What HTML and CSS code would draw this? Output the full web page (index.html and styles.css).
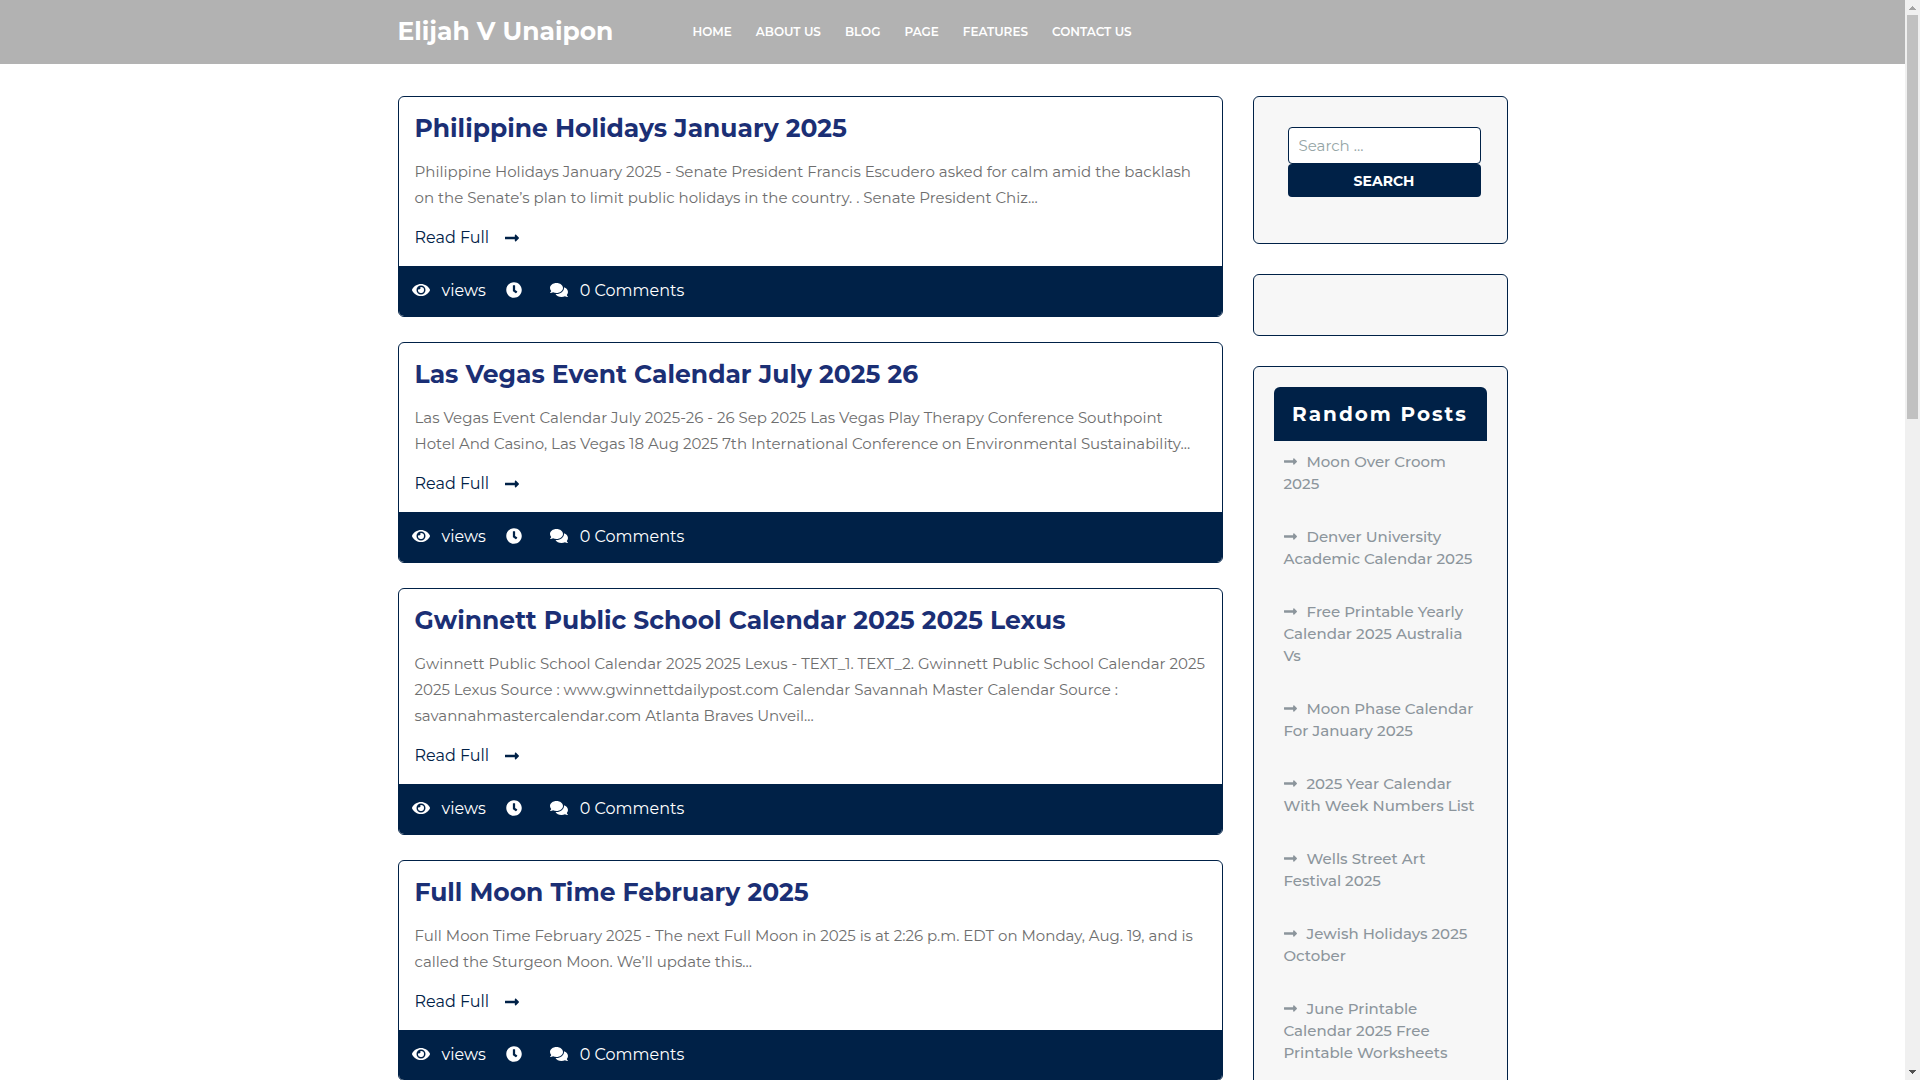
FILE: index.html
```
<!DOCTYPE html>
<html lang="en">
<head>
<meta charset="utf-8">
<title>Elijah V Unaipon</title>
<meta name="viewport" content="width=device-width, initial-scale=1">
<link rel="stylesheet" href="styles.css">
</head>
<body>
<svg class="sprite" aria-hidden="true">
  <symbol id="arrow" viewBox="0 0 448 512"><path d="M313.941 216H12c-6.627 0-12 5.373-12 12v56c0 6.627 5.373 12 12 12h301.941v46.059c0 21.382 25.851 32.09 40.971 16.971l86.059-86.059c9.373-9.373 9.373-24.569 0-33.941l-86.059-86.059c-15.119-15.119-40.971-4.411-40.971 16.971V216z"/></symbol>
  <symbol id="eye" viewBox="0 0 576 512"><path d="M572.52 241.4C518.29 135.59 410.93 64 288 64S57.68 135.64 3.48 241.41a32.35 32.35 0 0 0 0 29.19C57.71 376.41 165.07 448 288 448s230.32-71.64 284.52-177.41a32.35 32.35 0 0 0 0-29.19zM288 400a144 144 0 1 1 144-144 143.93 143.93 0 0 1-144 144zm0-240a95.31 95.31 0 0 0-25.31 3.79 47.85 47.85 0 0 1-66.9 66.9A95.78 95.78 0 1 0 288 160z"/></symbol>
  <symbol id="clock" viewBox="0 0 512 512"><path d="M256 8C119 8 8 119 8 256s111 248 248 248 248-111 248-248S393 8 256 8zm57.1 350.1L224.9 294c-3.1-2.3-4.9-5.9-4.9-9.7V116c0-6.6 5.4-12 12-12h48c6.6 0 12 5.4 12 12v137.7l63.5 46.2c5.4 3.9 6.5 11.4 2.6 16.8l-28.2 38.8c-3.9 5.3-11.4 6.5-16.8 2.6z"/></symbol>
  <symbol id="comments" viewBox="0 0 576 512"><path d="M416 192c0-88.4-93.1-160-208-160S0 103.6 0 192c0 34.3 14.1 65.9 38 92-13.4 30.2-35.5 54.2-35.8 54.5-2.2 2.3-2.8 5.7-1.5 8.7S4.8 352 8 352c36.6 0 66.9-12.3 88.7-25 32.2 15.7 70.3 25 111.3 25 114.9 0 208-71.6 208-160zm122 220c23.9-26 38-57.7 38-92 0-66.9-53.5-124.2-129.3-148.1.9 6.6 1.3 13.3 1.3 20.1 0 105.9-107.7 192-240 192-10.8 0-21.3-.8-31.7-1.9C207.8 439.6 281.8 480 368 480c41 0 79.1-9.2 111.3-25 21.8 12.7 52.1 25 88.7 25 3.2 0 6.1-1.9 7.3-4.8 1.3-3 .7-6.4-1.5-8.7-.3-.3-22.4-24.2-35.8-54.5z"/></symbol>
</svg>
<div class="page">
  <header class="site-header">
    <div class="container header-row">
      <a class="logo" href="#">Elijah V Unaipon</a>
      <nav class="menu">
        <a href="#">HOME</a>
        <a href="#">ABOUT US</a>
        <a href="#">BLOG</a>
        <a href="#">PAGE</a>
        <a href="#">FEATURES</a>
        <a href="#">CONTACT US</a>
      </nav>
    </div>
  </header>
  <div class="container columns">
    <main class="posts">
      <article class="post">
        <div class="post-body">
          <h2><a href="#">Philippine Holidays January 2025</a></h2>
          <p>Philippine Holidays January 2025 - Senate President Francis Escudero asked for calm amid the backlash on the Senate’s plan to limit public holidays in the country. . Senate President Chiz…</p>
          <a class="read" href="#">Read Full <svg class="icon-arrow"><use href="#arrow"/></svg></a>
        </div>
        <div class="post-meta">
          <span class="meta"><svg class="icon-wide"><use href="#eye"/></svg>views</span>
          <span class="meta"><svg class="icon-round"><use href="#clock"/></svg></span>
          <a class="meta" href="#"><svg class="icon-wide"><use href="#comments"/></svg>0 Comments</a>
        </div>
      </article>
      <article class="post">
        <div class="post-body">
          <h2><a href="#">Las Vegas Event Calendar July 2025 26</a></h2>
          <p>Las Vegas Event Calendar July 2025-26 - 26 Sep 2025 Las Vegas Play Therapy Conference Southpoint Hotel And Casino, Las Vegas 18 Aug 2025 7th International Conference on Environmental Sustainability…</p>
          <a class="read" href="#">Read Full <svg class="icon-arrow"><use href="#arrow"/></svg></a>
        </div>
        <div class="post-meta">
          <span class="meta"><svg class="icon-wide"><use href="#eye"/></svg>views</span>
          <span class="meta"><svg class="icon-round"><use href="#clock"/></svg></span>
          <a class="meta" href="#"><svg class="icon-wide"><use href="#comments"/></svg>0 Comments</a>
        </div>
      </article>
      <article class="post">
        <div class="post-body">
          <h2><a href="#">Gwinnett Public School Calendar 2025 2025 Lexus</a></h2>
          <p>Gwinnett Public School Calendar 2025 2025 Lexus - TEXT_1. TEXT_2. Gwinnett Public School Calendar 2025 2025 Lexus Source : www.gwinnettdailypost.com Calendar Savannah Master Calendar Source : savannahmastercalendar.com Atlanta Braves Unveil…</p>
          <a class="read" href="#">Read Full <svg class="icon-arrow"><use href="#arrow"/></svg></a>
        </div>
        <div class="post-meta">
          <span class="meta"><svg class="icon-wide"><use href="#eye"/></svg>views</span>
          <span class="meta"><svg class="icon-round"><use href="#clock"/></svg></span>
          <a class="meta" href="#"><svg class="icon-wide"><use href="#comments"/></svg>0 Comments</a>
        </div>
      </article>
      <article class="post">
        <div class="post-body">
          <h2><a href="#">Full Moon Time February 2025</a></h2>
          <p>Full Moon Time February 2025 - The next Full Moon in 2025 is at 2:26 p.m. EDT on Monday, Aug. 19, and is called the Sturgeon Moon. We’ll update this…</p>
          <a class="read" href="#">Read Full <svg class="icon-arrow"><use href="#arrow"/></svg></a>
        </div>
        <div class="post-meta">
          <span class="meta"><svg class="icon-wide"><use href="#eye"/></svg>views</span>
          <span class="meta"><svg class="icon-round"><use href="#clock"/></svg></span>
          <a class="meta" href="#"><svg class="icon-wide"><use href="#comments"/></svg>0 Comments</a>
        </div>
      </article>
    </main>
    <aside class="sidebar">
      <section class="widget widget-search">
        <form class="search">
          <input type="search" placeholder="Search …" aria-label="Search for:">
          <button type="submit">SEARCH</button>
        </form>
      </section>
      <section class="widget widget-empty"></section>
      <section class="widget">
        <h3>Random Posts</h3>
        <ul>
          <li><a href="#"><svg class="icon-item"><use href="#arrow"/></svg>Moon Over Croom 2025</a></li>
          <li><a href="#"><svg class="icon-item"><use href="#arrow"/></svg>Denver University Academic Calendar 2025</a></li>
          <li><a href="#"><svg class="icon-item"><use href="#arrow"/></svg>Free Printable Yearly Calendar 2025 Australia Vs</a></li>
          <li><a href="#"><svg class="icon-item"><use href="#arrow"/></svg>Moon Phase Calendar For January 2025</a></li>
          <li><a href="#"><svg class="icon-item"><use href="#arrow"/></svg>2025 Year Calendar With Week Numbers List</a></li>
          <li><a href="#"><svg class="icon-item"><use href="#arrow"/></svg>Wells Street Art Festival 2025</a></li>
          <li><a href="#"><svg class="icon-item"><use href="#arrow"/></svg>Jewish Holidays 2025 October</a></li>
          <li><a href="#"><svg class="icon-item"><use href="#arrow"/></svg>June Printable Calendar 2025 Free Printable Worksheets</a></li>
        </ul>
      </section>
    </aside>
  </div>
</div>
<div class="scrollbar" aria-hidden="true">
  <svg class="scroll-arrow up" viewBox="0 0 7 4"><path d="M3 0h1v1h1v1h1v1h1v1H0V3h1V2h1V1h1z"/></svg>
  <div class="track"><div class="thumb"></div></div>
  <svg class="scroll-arrow down" viewBox="0 0 7 4"><path d="M3 4h1V3h1V2h1V1h1V0H0v1h1v1h1v1h1z"/></svg>
</div>
</body>
</html>
```
FILE: styles.css
```
:root {
  --navy: #002147;
  --title: #1b2f75;
  --text: #6e6e6e;
  --muted: #8c959c;
  --panel: #f7f7f7;
}

* {
  box-sizing: border-box;
}

body {
  margin: 0;
  display: flex;
  height: 100vh;
  overflow: hidden;
  background: #fff;
  color: var(--text);
  font-family: Montserrat, Inter, "Open Sans", sans-serif;
  font-size: 16px;
}

a {
  color: inherit;
  text-decoration: none;
}

svg {
  fill: currentColor;
  flex: none;
}

.sprite {
  display: none;
}

.page {
  flex: 1;
  min-width: 0;
  overflow: hidden;
}

.container {
  width: 100%;
  max-width: 1140px;
  margin: 0 auto;
  padding: 0 15px;
}

.site-header {
  background: #b2b2b2;
  color: #fff;
}

.header-row {
  display: grid;
  grid-template-columns: 295px 1fr;
  align-items: center;
  height: 64px;
  padding-bottom: 2px;
}

.logo {
  font-size: 25px;
  font-weight: 700;
}

.menu {
  display: flex;
  gap: 24px;
  font-size: 12px;
  font-weight: 600;
}

.columns {
  display: grid;
  grid-template-columns: minmax(0, 1fr) 255px;
  gap: 30px;
  align-items: start;
  padding-top: 32px;
}

.posts {
  display: flex;
  flex-direction: column;
  gap: 25px;
}

.post {
  border: 1px solid var(--navy);
  border-radius: 6px;
  overflow: hidden;
}

.post-body {
  padding: 16px 15px 16px 16px;
}

.post h2 {
  margin: 0 0 16px;
  color: var(--title);
  font-size: 25px;
  line-height: 30px;
}

.post p {
  margin: 0 0 15px;
  font-size: 15px;
  line-height: 26px;
}

.read {
  display: flex;
  align-items: center;
  gap: 16px;
  color: var(--navy);
  line-height: 24px;
}

.icon-arrow {
  width: 14px;
  height: 16px;
}

.post-meta {
  display: flex;
  align-items: center;
  height: 50px;
  padding: 0 13px 2px;
  gap: 20px;
  background: var(--navy);
  color: #fff;
}

.meta {
  display: flex;
  align-items: center;
  gap: 12px;
}

.meta + a.meta {
  margin-left: 8px;
}

.icon-wide {
  width: 18px;
  height: 16px;
}

.icon-round {
  width: 16px;
  height: 16px;
}

.sidebar {
  display: flex;
  flex-direction: column;
  gap: 30px;
}

.widget {
  padding: 20px;
  border: 1px solid var(--navy);
  border-radius: 6px;
  background: var(--panel);
}

.widget-search {
  padding: 30px 26px 46px 34px;
}

.widget-empty {
  height: 62px;
}

.search {
  display: flex;
  flex-direction: column;
}

.search input {
  width: 100%;
  height: 37px;
  padding: 0 10px;
  border: 1px solid var(--navy);
  border-radius: 4px;
  background: #fff;
  font: inherit;
  font-size: 15px;
}

.search input::placeholder {
  color: #95a5a6;
}

.search button {
  height: 33px;
  padding: 0;
  border: 0;
  border-radius: 4px;
  background: var(--navy);
  color: #fff;
  font: inherit;
  font-size: 14px;
  font-weight: 700;
}

.widget h3 {
  margin: 0;
  padding: 12px 0;
  border-radius: 6px 6px 0 0;
  background: var(--navy);
  color: #fff;
  font-size: 20px;
  letter-spacing: 2px;
  line-height: 30px;
  text-align: center;
}

.widget ul {
  display: flex;
  flex-direction: column;
  gap: 31px;
  margin: 0;
  padding: 10px;
  list-style: none;
  color: var(--muted);
  font-size: 15px;
  font-weight: 500;
  line-height: 22px;
}

.icon-item {
  width: 13px;
  height: 15px;
  margin-right: 10px;
  vertical-align: -2px;
}

.scrollbar {
  display: flex;
  flex: none;
  flex-direction: column;
  align-items: center;
  width: 15px;
  padding: 6px 0;
  background: #f0f0f0;
}

.scroll-arrow {
  width: 7px;
  height: 4px;
  shape-rendering: crispEdges;
}

.up {
  color: #a3a3a3;
}

.down {
  color: #505050;
}

.track {
  flex: 1;
  width: 11px;
  padding: 5px 0;
}

.thumb {
  height: 38.5%;
  background: #c1c1c1;
}
```
